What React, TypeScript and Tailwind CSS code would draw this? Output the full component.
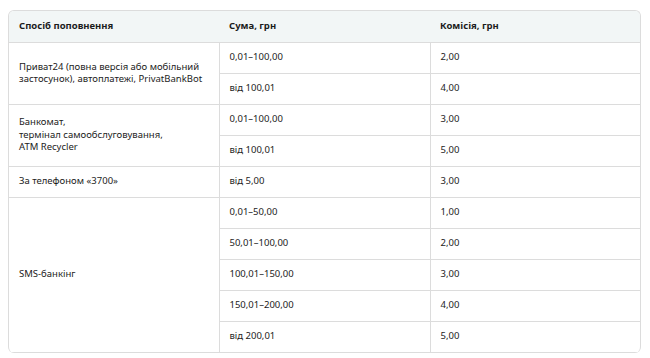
import React from "react";

const cell = "h-[31px] px-[10px] py-0 align-middle border-b border-[#dcdcdc] text-left whitespace-nowrap";

export default function App() {
  const font = { fontFamily: '"Noto Sans", "Open Sans", sans-serif' };
  return (
    <div className="w-[650px] h-[358px] bg-white pt-[10px] pl-[8px]" style={font}>
      <div className="w-[633px] border border-[#dcdcdc] border-b-0 rounded-[6px] overflow-hidden text-[9.5px] leading-[12.5px] text-[#1c1c1c]">
        <table className="w-full border-collapse table-fixed">
          <colgroup>
            <col className="w-[210px]" />
            <col className="w-[211px]" />
            <col />
          </colgroup>
          <thead>
            <tr className="bg-[#f2f6f6]">
              <th className={`${cell} font-bold h-[30px]`}>Спосіб поповнення</th>
              <th className={`${cell} font-bold h-[30px]`}>Сума, грн</th>
              <th className={`${cell} font-bold h-[30px]`}>Комісія, грн</th>
            </tr>
          </thead>
          <tbody>
            <tr>
              <td rowSpan={2} className={cell}>
                Приват24 (повна версія або мобільний
                <br />
                застосунок), автоплатежі, PrivatBankBot
              </td>
              <td className={`${cell} border-l`}>0,01–100,00</td>
              <td className={`${cell} border-l`}>2,00</td>
            </tr>
            <tr>
              <td className={`${cell} border-l`}>від 100,01</td>
              <td className={`${cell} border-l`}>4,00</td>
            </tr>
            <tr>
              <td rowSpan={2} className={cell}>
                Банкомат,
                <br />
                термінал самообслуговування,
                <br />
                ATM Recycler
              </td>
              <td className={`${cell} border-l`}>0,01–100,00</td>
              <td className={`${cell} border-l`}>3,00</td>
            </tr>
            <tr>
              <td className={`${cell} border-l`}>від 100,01</td>
              <td className={`${cell} border-l`}>5,00</td>
            </tr>
            <tr>
              <td className={cell}>За телефоном «3700»</td>
              <td className={`${cell} border-l`}>від 5,00</td>
              <td className={`${cell} border-l`}>3,00</td>
            </tr>
            <tr>
              <td rowSpan={5} className={cell}>SMS-банкінг</td>
              <td className={`${cell} border-l`}>0,01–50,00</td>
              <td className={`${cell} border-l`}>1,00</td>
            </tr>
            <tr>
              <td className={`${cell} border-l`}>50,01–100,00</td>
              <td className={`${cell} border-l`}>2,00</td>
            </tr>
            <tr>
              <td className={`${cell} border-l`}>100,01–150,00</td>
              <td className={`${cell} border-l`}>3,00</td>
            </tr>
            <tr>
              <td className={`${cell} border-l`}>150,01–200,00</td>
              <td className={`${cell} border-l`}>4,00</td>
            </tr>
            <tr>
              <td className={`${cell} border-l`}>від 200,01</td>
              <td className={`${cell} border-l`}>5,00</td>
            </tr>
          </tbody>
        </table>
      </div>
    </div>
  );
}
